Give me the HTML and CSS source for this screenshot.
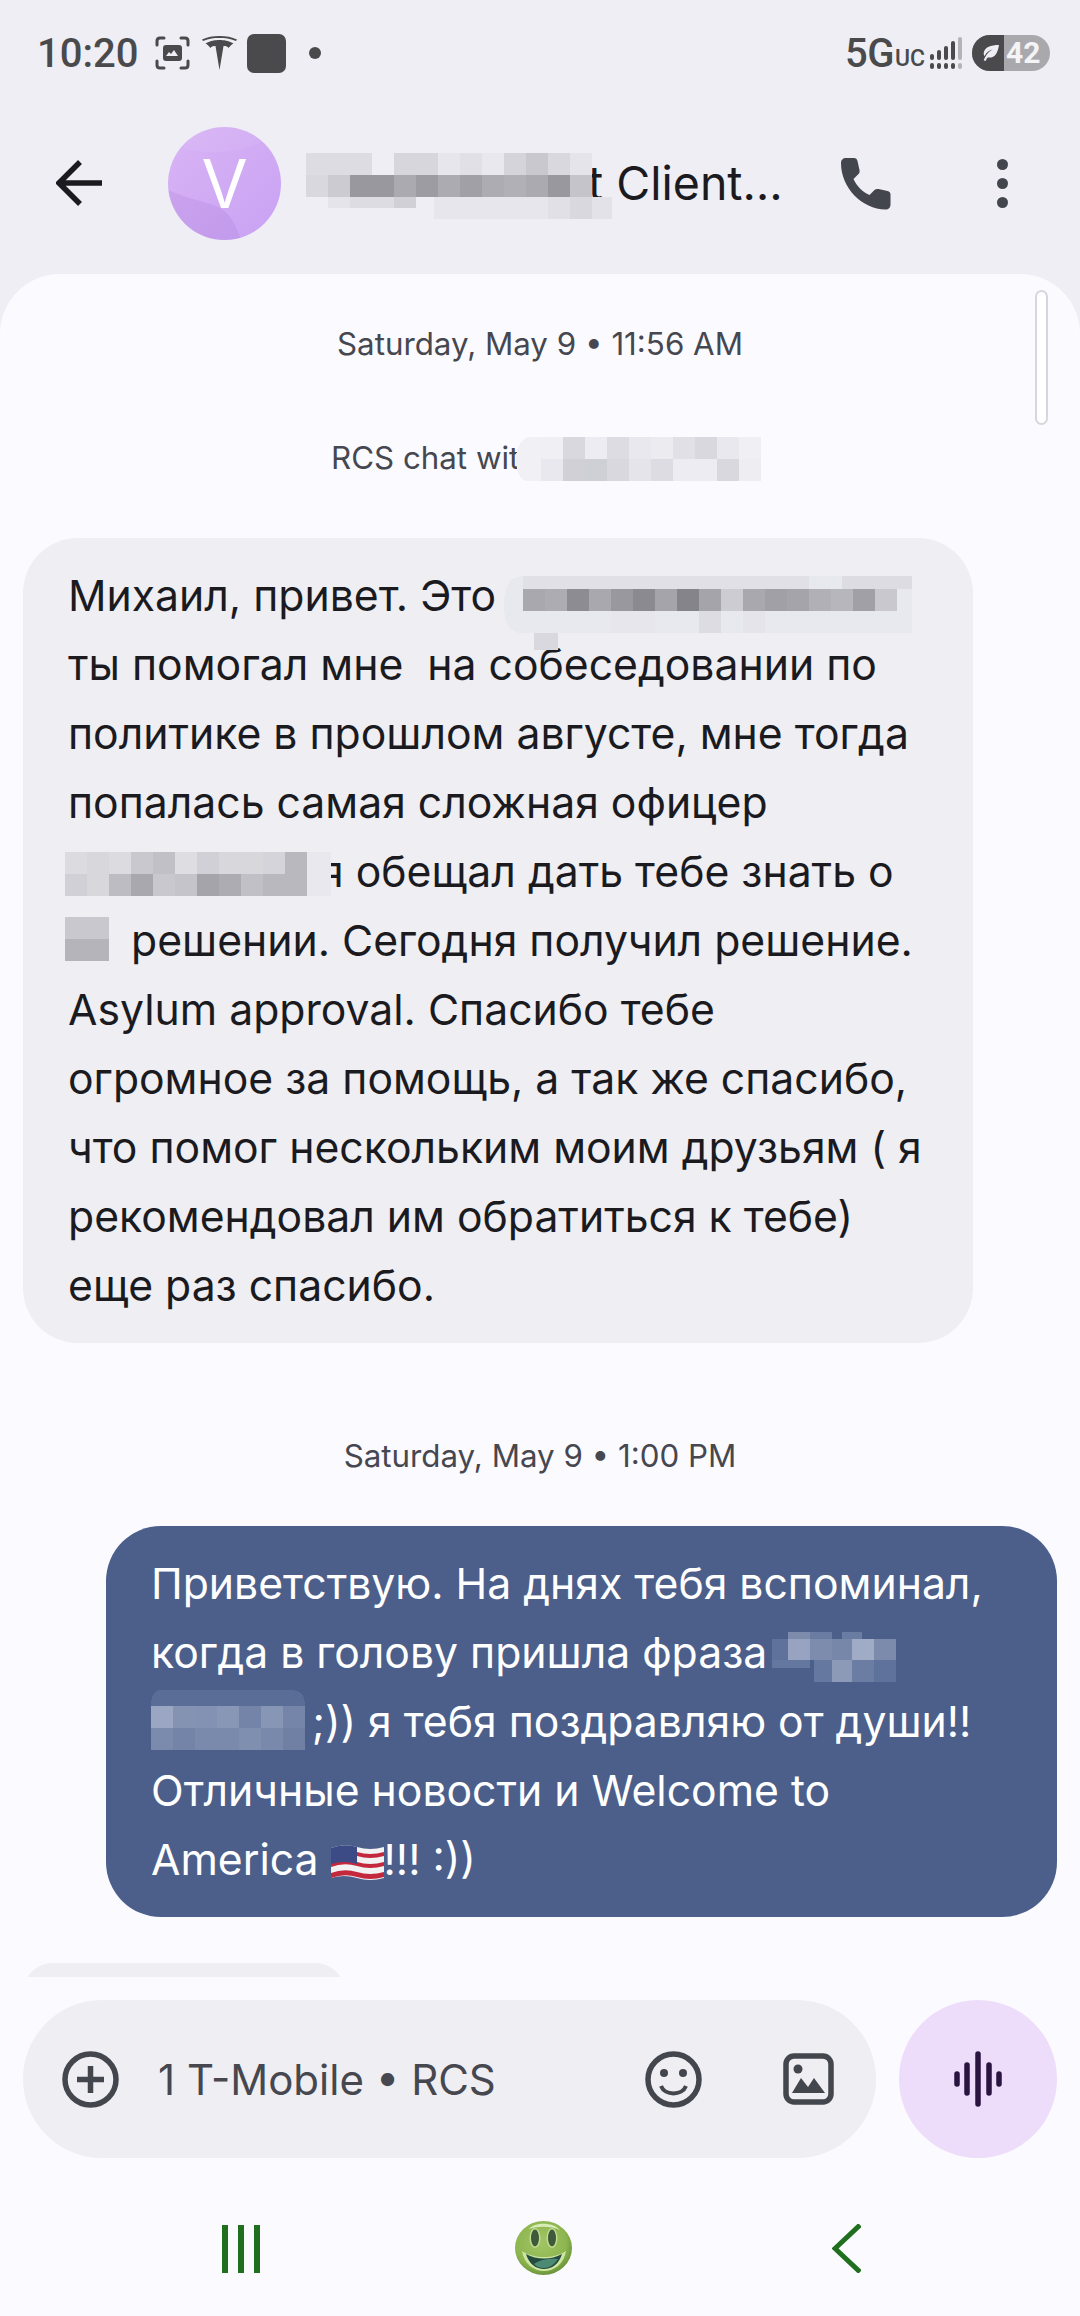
FILE: index.html
```html
<!DOCTYPE html>
<html lang="ru">
<head>
    <meta charset="UTF-8">
    <title>Messages</title>
    <link rel="stylesheet" href="styles.css">
</head>
<body>
<div id="app">
    <div class="status">
        <span class="time">10:20</span>
        <svg class="st-scan" viewBox="0 0 35 34" fill="none" stroke="#4a4a4c" stroke-width="3" stroke-linecap="round">
            <path d="M2 9V5q0-3 3-3h4M26 2h4q3 0 3 3v4M2 25v4q0 3 3 3h4M33 25v4q0 3-3 3h-4"/>
            <rect x="8" y="9" width="19" height="16" rx="3" fill="#4a4a4c" stroke="none"/>
            <path d="M11 20l3-4 2 2 3-4 4 6z" fill="#eeeef4" stroke="none"/>
        </svg>
        <svg class="st-tesla" viewBox="0 0 35 34" fill="#4a4a4c">
            <path d="M17.5 34l4-24c3 0 4 .5 5 2 2-2.500 3-3.500 5-4.500C26 4.500 22 4 17.500 4S9 4.500 3.500 7.500c2 1 3 2 5 4.500 1-1.500 2-2 5-2z"/>
            <path d="M0 3.500C5 1 11 0 17.500 0S30 1 35 3.500l-1 1.500C28 2.500 23 2 17.500 2S7 2.500 1 5z"/>
        </svg>
        <span class="st-square"></span>
        <span class="st-dot"></span>
        <span class="st-right">
            <span class="net">5G</span><span class="uc">UC</span>
            <svg class="st-signal" viewBox="0 0 32 32" fill="#4a4a4c">
                <rect x="0" y="17" width="4" height="6" rx="2"/>
                <rect x="7" y="13" width="4" height="10" rx="2"/>
                <rect x="14" y="9" width="4" height="14" rx="2"/>
                <rect x="21" y="4" width="4" height="19" rx="2"/>
                <rect x="28" y="0" width="4" height="23" rx="2" fill="#b4b4b8"/>
                <rect x="0" y="26" width="4" height="6" rx="2"/>
                <rect x="7" y="26" width="4" height="6" rx="2"/>
                <rect x="14" y="26" width="4" height="6" rx="2"/>
                <rect x="21" y="26" width="4" height="6" rx="2"/>
                <rect x="28" y="26" width="4" height="6" rx="2" fill="#b4b4b8"/>
            </svg>
            <span class="battery">
                <span class="bat-leaf">
                    <svg viewBox="0 0 22 20" fill="#eeeef4">
                        <path d="M21 1C12 1 5 3 4 10c0 1.500.3 2.500 1 3.500C7 9 10 7 14 6c-4 2-7 5-10 12l2 1c1-2 1.500-3 2.500-4 8 1 11-5 12.500-14z"/>
                    </svg>
                </span>
                <span class="bat-num">42</span>
            </span>
        </span>
    </div>

    <div class="header">
        <svg class="back" viewBox="0 0 46 46" fill="none" stroke="#1b1b1f" stroke-width="5.500">
            <path d="M46 23H4M24 2L3 23l21 21"/>
        </svg>
        <div class="avatar">
            <svg class="avatar-bg" viewBox="0 0 113 113">
                <path d="M15 21c25 7 55 6 85-9L80 0H30z" fill="#fff" opacity=".06"/>
                <path d="M0 63c20 9 35 11 48 16 13 5 20 18 25 34H40C15 105 2 85 0 63z" fill="#7a3fb0" opacity=".1"/>
            </svg>
            <span>V</span>
        </div>
        <div class="title">t Client…</div>
        <svg class="mosaic m-title" viewBox="0 0 307 66" shape-rendering="crispEdges">
            <g transform="scale(22)">
                <rect x="0" y="0" width="3" height="1" fill="#dcdce2"/>
                <rect x="4" y="0" width="2" height="1" fill="#d6d6dc"/>
                <rect x="6" y="0" width="1" height="1" fill="#e6e6ec"/>
                <rect x="7" y="0" width="1" height="1" fill="#e0e0e6"/>
                <rect x="8" y="0" width="1" height="1" fill="#e8e8ee"/>
                <rect x="9" y="0" width="1" height="1" fill="#d4d4da"/>
                <rect x="10" y="0" width="1" height="1" fill="#c8c8ce"/>
                <rect x="11" y="0" width="1" height="1" fill="#d8d8de"/>
                <rect x="12" y="0" width="1" height="1" fill="#e4e4ea"/>
                <rect x="0" y="1" width="1" height="1" fill="#d8d8de"/>
                <rect x="1" y="1" width="1" height="1" fill="#cbcbd1"/>
                <rect x="2" y="1" width="2" height="1" fill="#98989e"/>
                <rect x="4" y="1" width="1" height="1" fill="#aaaab0"/>
                <rect x="5" y="1" width="1" height="1" fill="#9c9ca2"/>
                <rect x="6" y="1" width="1" height="1" fill="#ababb1"/>
                <rect x="7" y="1" width="1" height="1" fill="#a0a0a6"/>
                <rect x="8" y="1" width="1" height="1" fill="#acacb2"/>
                <rect x="9" y="1" width="1" height="1" fill="#b0b0b6"/>
                <rect x="10" y="1" width="1" height="1" fill="#aaaab0"/>
                <rect x="11" y="1" width="1" height="1" fill="#98989e"/>
                <rect x="12" y="1" width="1" height="1" fill="#c4c4ca"/>
                <rect x="1" y="2" width="1" height=".5" fill="#e4e4ea"/>
                <rect x="2" y="2" width="2" height=".5" fill="#dcdce2"/>
                <rect x="4" y="2" width="1" height=".5" fill="#d0d0d6"/>
                <rect x="5.800" y="2" width="7.200" height="1" fill="#e6e6ec"/>
                <rect x="11" y="2" width="1" height="1" fill="#e0e0e6"/>
                <rect x="12" y="2" width="1" height="1" fill="#d8d8de"/>
                <rect x="13" y="2" width=".9" height="1" fill="#e2e2e8"/>
            </g>
        </svg>
        <svg class="phone" viewBox="0 0 53 53" fill="#44464e">
            <path d="M1 6C1 3 3 1 6 1h8c2 0 3 1 3.500 3l2 9c.3 1.500 0 3-1 4l-5 5c3 7 9 13 16 16l5-5c1-1 2.500-1.300 4-1l9 2c2 .5 3 1.500 3 3.500v10c0 3-2 5-5 5C22 52 1 31 1 6z"/>
        </svg>
        <span class="dots"><i></i><i></i><i></i></span>
    </div>

    <div class="panel">
        <div class="chat">
            <div class="scrollbar"></div>
            <p class="stamp first">Saturday, May 9 • 11:56 AM</p>
            <p class="stamp rcs">RCS chat with</p>
            <svg class="mosaic m-rcs" viewBox="0 0 248 44" shape-rendering="crispEdges">
                <path d="M0 22Q0 6 12 0h14v44H10Q0 40 0 22z" fill="#f1f1f5"/>
                <g transform="translate(3 0) scale(22)">
                    <rect x="1" y="0" width="1" height="1" fill="#f0f0f4"/>
                    <rect x="2" y="0" width="1" height="1" fill="#d8d8de"/>
                    <rect x="3" y="0" width="1" height="1" fill="#ececf2"/>
                    <rect x="4" y="0" width="1" height="1" fill="#dcdce2"/>
                    <rect x="5" y="0" width="1" height="1" fill="#e8e8ee"/>
                    <rect x="6" y="0" width="1" height="1" fill="#ebebf0"/>
                    <rect x="7" y="0" width="1" height="1" fill="#e0e0e6"/>
                    <rect x="8" y="0" width="1" height="1" fill="#d8d8de"/>
                    <rect x="9" y="0" width="1" height="1" fill="#e8e8ee"/>
                    <rect x="10" y="0" width="1" height="1" fill="#f0f0f4"/>
                    <rect x="1" y="1" width="1" height="1" fill="#e8e8ee"/>
                    <rect x="2" y="1" width="1" height="1" fill="#d0d0d6"/>
                    <rect x="3" y="1" width="1" height="1" fill="#cfcfd6"/>
                    <rect x="4" y="1" width="1" height="1" fill="#d8d8de"/>
                    <rect x="5" y="1" width="1" height="1" fill="#e4e4ea"/>
                    <rect x="6" y="1" width="1" height="1" fill="#dcdce2"/>
                    <rect x="7" y="1" width="1" height="1" fill="#ececf2"/>
                    <rect x="8" y="1" width="1" height="1" fill="#ececf2"/>
                    <rect x="9" y="1" width="1" height="1" fill="#d8d8de"/>
                    <rect x="10" y="1" width="1" height="1" fill="#eeeef2"/>
                </g>
            </svg>

            <div class="bubble incoming">
                <span class="line">Михаил, привет. Это</span>
                <span class="line">ты помогал мне  на собеседовании по</span>
                <span class="line">политике в прошлом августе, мне тогда</span>
                <span class="line">попалась самая сложная офицер</span>
                <span class="line skip-a">я обещал дать тебе знать о</span>
                <span class="line skip-b">решении. Сегодня получил решение.</span>
                <span class="line">Asylum approval. Спасибо тебе</span>
                <span class="line">огромное за помощь, а так же спасибо,</span>
                <span class="line">что помог нескольким моим друзьям ( я</span>
                <span class="line">рекомендовал им обратиться к тебе)</span>
                <span class="line">еще раз спасибо.</span>

                <svg class="mosaic m-name" viewBox="0 0 408 74" shape-rendering="crispEdges">
                    <path d="M19 0h389v57H19Q0 57 0 30 0 0 19 0z" fill="#e6e6ec" opacity=".7"/>
                    <g transform="translate(19 13) scale(22)">
                        <rect x="0" y="-.6" width="13" height=".6" fill="#e0e0e6"/>
                        <rect x="14.500" y="-.6" width="7.500" height=".6" fill="#dcdce2"/>
                        <rect x="0" y="0" width="1" height="1" fill="#a8a8ae"/>
                        <rect x="1" y="0" width="1" height="1" fill="#acacb2"/>
                        <rect x="2" y="0" width="1" height="1" fill="#8c8c92"/>
                        <rect x="3" y="0" width="1" height="1" fill="#a8a8ae"/>
                        <rect x="4" y="0" width="1" height="1" fill="#98989e"/>
                        <rect x="5" y="0" width="1" height="1" fill="#8a8a90"/>
                        <rect x="6" y="0" width="1" height="1" fill="#a4a4aa"/>
                        <rect x="7" y="0" width="1" height="1" fill="#84848a"/>
                        <rect x="8" y="0" width="1" height="1" fill="#a4a4aa"/>
                        <rect x="9" y="0" width="1" height="1" fill="#ccccd2"/>
                        <rect x="10" y="0" width="1" height="1" fill="#a8a8ae"/>
                        <rect x="11" y="0" width="1" height="1" fill="#a0a0a6"/>
                        <rect x="12" y="0" width="1" height="1" fill="#a4a4aa"/>
                        <rect x="13" y="0" width="1" height="1" fill="#b0b0b6"/>
                        <rect x="14" y="0" width="1" height="1" fill="#b6b6bc"/>
                        <rect x="15" y="0" width="1" height="1" fill="#a0a0a6"/>
                        <rect x="16" y="0" width="1" height="1" fill="#c8c8ce"/>
                        <rect x="4" y="1" width="2" height="1" fill="#e6e6ec"/>
                        <rect x="8" y="1" width="1" height="1" fill="#dcdce2"/>
                        <rect x="10" y="1" width="1" height="1" fill="#e4e4ea"/>
                    </g>
                    <rect x="30" y="57" width="24" height="17" fill="#d8d8de"/>
                </svg>
                <svg class="mosaic m-surname" viewBox="0 0 266 44" shape-rendering="crispEdges">
                    <rect x="240" y="0" width="26" height="44" fill="#e8e8ee"/>
                    <g transform="scale(22)">
                        <rect x="0" y="0" width="1" height="1" fill="#dcdce0"/>
                        <rect x="1" y="0" width="1" height="1" fill="#d8d8dc"/>
                        <rect x="2" y="0" width="1" height="1" fill="#dcdce0"/>
                        <rect x="3" y="0" width="1" height="1" fill="#c8c8ce"/>
                        <rect x="4" y="0" width="1" height="1" fill="#c0c0c6"/>
                        <rect x="5" y="0" width="1" height="1" fill="#dedee2"/>
                        <rect x="6" y="0" width="1" height="1" fill="#d0d0d6"/>
                        <rect x="7" y="0" width="1" height="1" fill="#d8d8dc"/>
                        <rect x="8" y="0" width="1" height="1" fill="#d8d8dc"/>
                        <rect x="9" y="0" width="1" height="1" fill="#d4d4da"/>
                        <rect x="10" y="0" width="1" height="1" fill="#b8b8be"/>
                        <rect x="0" y="1" width="1" height="1" fill="#d0d0d6"/>
                        <rect x="1" y="1" width="1" height="1" fill="#d8d8dc"/>
                        <rect x="2" y="1" width="1" height="1" fill="#bcbcc2"/>
                        <rect x="3" y="1" width="1" height="1" fill="#a8a8ae"/>
                        <rect x="4" y="1" width="1" height="1" fill="#c8c8ce"/>
                        <rect x="5" y="1" width="1" height="1" fill="#c4c4ca"/>
                        <rect x="6" y="1" width="1" height="1" fill="#a4a4aa"/>
                        <rect x="7" y="1" width="1" height="1" fill="#acacb2"/>
                        <rect x="8" y="1" width="1" height="1" fill="#c0c0c6"/>
                        <rect x="9" y="1" width="1" height="1" fill="#b8b8be"/>
                        <rect x="10" y="1" width="1" height="1" fill="#b8b8be"/>
                    </g>
                </svg>
                <svg class="mosaic m-word" viewBox="0 0 44 44" shape-rendering="crispEdges">
                    <rect width="44" height="22" fill="#c8c8ce"/>
                    <rect y="22" width="44" height="22" fill="#b4b4ba"/>
                </svg>
            </div>

            <p class="stamp second">Saturday, May 9 • 1:00 PM</p>

            <div class="bubble outgoing">
                <span class="line">Приветствую. На днях тебя вспоминал,</span>
                <span class="line">когда в голову пришла фраза</span>
                <span class="line skip-c">;)) я тебя поздравляю от души!!</span>
                <span class="line">Отличные новости и Welcome to</span>
                <span class="line">America <svg class="flag" viewBox="0 0 53 36">
                    <path d="M0 3Q13-2 26 2t27 0v31q-14 4-27 0T0 33z" fill="#f2f2f2"/>
                    <path d="M0 8Q13 3 26 7t27 0v4q-14 4-27 0T0 12zM0 18q13-5 26-1t27 0v4q-14 4-27 0T0 22zM0 28q13-5 26-1t27 0v5q-14 4-27 0T0 33z" fill="#c4283d"/>
                    <path d="M0 3Q13-2 26 2v17Q13 15 0 19z" fill="#3c4a86"/>
                </svg>!!! :))</span>

                <svg class="mosaic m-phrase" viewBox="0 0 124 50" shape-rendering="crispEdges">
                    <rect x="16" y="0" width="22" height="7" fill="#7d8bac"/>
                    <rect x="38" y="0" width="22" height="7" fill="#6a7ca2"/>
                    <rect x="70" y="0" width="20" height="7" fill="#6a7ca2"/>
                    <rect x="0" y="7" width="16" height="21" fill="#5f729b"/>
                    <rect x="16" y="7" width="22" height="21" fill="#97a3c0"/>
                    <rect x="38" y="7" width="22" height="21" fill="#7d8bac"/>
                    <rect x="60" y="7" width="20" height="21" fill="#7687aa"/>
                    <rect x="80" y="7" width="22" height="21" fill="#a0abc5"/>
                    <rect x="102" y="7" width="22" height="21" fill="#7c8aab"/>
                    <rect x="0" y="28" width="38" height="8" fill="#64779e"/>
                    <rect x="42" y="28" width="18" height="22" fill="#6478a0"/>
                    <rect x="60" y="28" width="20" height="22" fill="#8c9ab8"/>
                    <rect x="80" y="28" width="22" height="22" fill="#6c7da3"/>
                    <rect x="102" y="28" width="22" height="22" fill="#5f729b"/>
                </svg>
                <svg class="mosaic m-phrase2" viewBox="0 0 165 60" shape-rendering="crispEdges">
                    <path d="M10 0h130q14 0 14 16H0Q0 0 10 0z" fill="#5a6d97"/>
                    <g transform="translate(0 16) scale(22)">
                        <rect x="0" y="0" width="1" height="1" fill="#9aa6c2"/>
                        <rect x="1" y="0" width="1" height="1" fill="#8593b3"/>
                        <rect x="2" y="0" width="1" height="1" fill="#8391b2"/>
                        <rect x="3" y="0" width="1" height="1" fill="#8997b6"/>
                        <rect x="4" y="0" width="1" height="1" fill="#7484a8"/>
                        <rect x="5" y="0" width="1" height="1" fill="#8896b5"/>
                        <rect x="6" y="0" width="1" height="1" fill="#7585a9"/>
                        <rect x="0" y="1" width="1" height="1" fill="#7b8bad"/>
                        <rect x="1" y="1" width="1" height="1" fill="#7484a8"/>
                        <rect x="2" y="1" width="1" height="1" fill="#7a8aac"/>
                        <rect x="3" y="1" width="1" height="1" fill="#7a8aac"/>
                        <rect x="4" y="1" width="1" height="1" fill="#7f8fb0"/>
                        <rect x="5" y="1" width="1" height="1" fill="#7989ab"/>
                        <rect x="6" y="1" width="1" height="1" fill="#7080a5"/>
                    </g>
                </svg>
            </div>

            <div class="bubble peek"></div>
        </div>

        <div class="footer">
            <div class="compose">
                <div class="pill">
                    <svg class="ic-plus" viewBox="0 0 57 57" fill="none" stroke="#44464e" stroke-width="5.500">
                        <circle cx="28.500" cy="28.500" r="25.500"/>
                        <path d="M28.500 15v27M15 28.500h27"/>
                    </svg>
                    <span class="hint">1 T-Mobile • RCS</span>
                    <svg class="ic-smile" viewBox="0 0 57 57" fill="none" stroke="#44464e" stroke-width="5.500">
                        <circle cx="28.500" cy="28.500" r="25.500"/>
                        <path d="M16 35c4 10 21 10 25 0" stroke-width="4"/>
                        <circle cx="19" cy="22" r="4" fill="#44464e" stroke="none"/>
                        <circle cx="38" cy="22" r="4" fill="#44464e" stroke="none"/>
                    </svg>
                    <svg class="ic-image" viewBox="0 0 51 52">
                        <rect x="3" y="3" width="45" height="46" rx="8" fill="none" stroke="#44464e" stroke-width="5.500"/>
                        <circle cx="15" cy="16" r="4.500" fill="#44464e"/>
                        <path d="M9 40l9-15 7 9 6-9 11 15z" fill="#44464e"/>
                    </svg>
                </div>
                <div class="mic">
                    <svg viewBox="0 0 48 56" fill="none" stroke="#2a1540" stroke-width="5.500" stroke-linecap="round">
                        <path d="M3 23v10M13 14v28M24 3v50M35 14v28M45 23v10"/>
                    </svg>
                </div>
            </div>
            <div class="nav">
                <span class="nav-bars"><i></i><i></i><i></i></span>
                <svg class="nav-face" viewBox="0 0 57 54">
                    <defs>
                        <radialGradient id="faceFill" cx=".45" cy=".4" r=".65">
                            <stop offset="0" stop-color="#a2c565"/>
                            <stop offset=".7" stop-color="#8cb54f"/>
                            <stop offset="1" stop-color="#5f8a34"/>
                        </radialGradient>
                    </defs>
                    <ellipse cx="28.500" cy="27" rx="28.500" ry="27" fill="url(#faceFill)"/>
                    <path d="M14 8C20 1 38 1 45 9 36 5 23 5 14 8z" fill="#d8ecb8"/>
                    <ellipse cx="20" cy="17" rx="5.500" ry="10" fill="#c4dd92"/>
                    <ellipse cx="37" cy="17" rx="5.500" ry="10" fill="#c4dd92"/>
                    <ellipse cx="20" cy="17" rx="4" ry="8.500" fill="#3f5a3a"/>
                    <ellipse cx="37" cy="17" rx="4" ry="8.500" fill="#3f5a3a"/>
                    <path d="M7 30c12 8 32 8 44 0-2 13-12 20-22 20S9 43 7 30z" fill="#cfe5a2"/>
                    <path d="M11 33c11 6 25 6 36 0-3 10-10 15-18 15S14 43 11 33z" fill="#234c3e"/>
                    <path d="M19 43c6-5 17-6 24-5-4 6-9 9-14 9-4 0-7-1-10-4z" fill="#4d8a74"/>
                </svg>
                <svg class="nav-back" viewBox="0 0 29 49" fill="none" stroke="#1f6f1f" stroke-width="5">
                    <path d="M28 1L3 24.500 28 48"/>
                </svg>
            </div>
        </div>
    </div>
</div>
</body>
</html>
```

FILE: styles.css
```css
body,p{ margin: 0;}
body{
    background-color: #eeeef4;
    font-family: Inter, "Noto Sans", sans-serif;
    color: #1b1b1f;
}
#app{
    display: flex;
    flex-direction: column;
    width: 1080px;
    height: 2316px;
    overflow: hidden;
}
svg{
    display: block;
    flex: none;
}
.mosaic{
    position: absolute;
}

/* status bar */
.status{
    display: flex;
    align-items: center;
    height: 106px;
    padding: 0 30px 0 37px;
    font-family: Roboto, sans-serif;
    color: #4a4a4c;
    box-sizing: border-box;
}
.time{
    font-size: 40px;
    font-weight: 500;
    width: 100px;
}
.st-scan{
    width: 35px;
    height: 34px;
    margin-left: 18px;
}
.st-tesla{
    width: 35px;
    height: 34px;
    margin-left: 12px;
}
.st-square{
    width: 39px;
    height: 39px;
    margin-left: 10px;
    border-radius: 7px;
    background-color: #4a4a4c;
}
.st-dot{
    width: 12px;
    height: 12px;
    margin-left: 23px;
    border-radius: 50%;
    background-color: #4a4a4c;
}
.st-right{
    display: flex;
    align-items: center;
    margin-left: auto;
}
.net{
    font-size: 40px;
    font-weight: 500;
    letter-spacing: -.5px;
}
.uc{
    font-size: 23px;
    font-weight: 500;
    margin: 10px 0 0 1px;
}
.st-signal{
    width: 32px;
    height: 32px;
    margin-left: 5px;
}
.battery{
    display: flex;
    width: 78px;
    height: 36px;
    margin-left: 10px;
    border-radius: 18px;
    overflow: hidden;
    background-color: #a9a9ad;
}
.bat-leaf{
    display: flex;
    align-items: center;
    justify-content: flex-end;
    width: 32px;
    padding-right: 4px;
    box-sizing: border-box;
    background-color: #4a4a4c;
}
.bat-leaf svg{
    width: 20px;
    height: 18px;
}
.bat-num{
    margin-left: 2px;
    font-size: 30px;
    font-weight: 700;
    line-height: 36px;
    color: #f4f4f6;
}

/* header */
.header{
    position: relative;
    display: flex;
    align-items: center;
    height: 168px;
    padding-bottom: 14px;
    box-sizing: border-box;
}
.back{
    width: 46px;
    height: 46px;
    margin-left: 56px;
}
.avatar{
    position: relative;
    width: 113px;
    height: 113px;
    margin-left: 66px;
    border-radius: 50%;
    overflow: hidden;
    background: linear-gradient(135deg, #d9b4f5, #c8a2f3);
    text-align: center;
    font-size: 67px;
    line-height: 113px;
    color: #fff;
}
.avatar-bg{
    position: absolute;
    top: 0;
    left: 0;
    width: 113px;
    height: 113px;
}
.avatar span{
    position: relative;
}
.title{
    width: 250px;
    margin-left: 307px;
    font-size: 46.500px;
    white-space: nowrap;
}
.m-title{
    top: 47px;
    left: 306px;
    width: 307px;
    height: 66px;
}
.phone{
    width: 53px;
    height: 53px;
    margin-left: 2px;
}
.dots{
    display: flex;
    flex-direction: column;
    gap: 8px;
    margin-left: 104px;
}
.dots i{
    display: block;
    width: 11px;
    height: 11px;
    border-radius: 50%;
    background-color: #44464e;
}

/* chat */
.panel{
    flex: 1;
    display: flex;
    flex-direction: column;
    border-radius: 60px 60px 0 0;
    background-color: #fafaff;
}
.chat{
    position: relative;
    height: 1703px;
    padding: 50px 23px 0;
    box-sizing: border-box;
    overflow: hidden;
}
.scrollbar{
    position: absolute;
    top: 16px;
    right: 32px;
    width: 9px;
    height: 131px;
    border: 2px solid #d6d6dc;
    border-radius: 7px;
    background-color: #fff;
}
.stamp{
    height: 40px;
    text-align: center;
    font-size: 31.300px;
    line-height: 40px;
    color: #46474f;
}
.rcs{
    margin-top: 74px;
    text-align: left;
    padding-left: 308px;
}
.m-rcs{
    top: 163px;
    left: 516px;
    width: 248px;
    height: 44px;
}
.second{
    margin-top: 93px;
}
.bubble{
    position: relative;
    padding: 23px 45px;
    box-sizing: border-box;
    border-radius: 55px;
    font-size: 42.700px;
    line-height: 69px;
}
.line{
    display: block;
    white-space: pre;
}
.incoming{
    width: 950px;
    margin-top: 60px;
    background-color: #eeeef3;
}
.outgoing{
    width: 951px;
    margin: 50px 0 0 83px;
    background-color: #4c5f8b;
    color: #fff;
}
.peek{
    width: 322px;
    height: 60px;
    margin-top: 46px;
    background-color: #eeeef3;
}
.skip-a{
    padding-left: 252px;
}
.skip-b{
    padding-left: 63px;
}
.skip-c{
    padding-left: 161px;
}
.flag{
    display: inline-block;
    width: 53px;
    height: 36px;
    vertical-align: -6px;
}
.m-name{
    top: 38px;
    left: 481px;
    width: 408px;
    height: 74px;
}
.m-surname{
    top: 314px;
    left: 42px;
    width: 266px;
    height: 44px;
}
.m-word{
    top: 379px;
    left: 42px;
    width: 44px;
    height: 44px;
}
.m-phrase{
    top: 106px;
    left: 666px;
    width: 124px;
    height: 50px;
}
.m-phrase2{
    top: 164px;
    left: 45px;
    width: 165px;
    height: 60px;
}

/* compose + nav */
.footer{
    flex: 1;
    padding-top: 23px;
}
.compose{
    display: flex;
    gap: 23px;
    padding: 0 23px;
}
.pill{
    flex: 1;
    display: flex;
    align-items: center;
    height: 158px;
    padding: 0 42px 0 39px;
    box-sizing: border-box;
    border-radius: 79px;
    background-color: #eeeef3;
}
.ic-plus{
    width: 57px;
    height: 57px;
}
.hint{
    flex: 1;
    margin-left: 39px;
    font-size: 42px;
    color: #46474f;
}
.ic-smile{
    width: 57px;
    height: 57px;
}
.ic-image{
    width: 51px;
    height: 52px;
    margin-left: 81px;
}
.mic{
    display: flex;
    align-items: center;
    justify-content: center;
    width: 158px;
    height: 158px;
    border-radius: 50%;
    background-color: #eedcfb;
}
.mic svg{
    width: 48px;
    height: 56px;
}
.nav{
    display: flex;
    align-items: flex-start;
    justify-content: space-between;
    padding: 62px 219px 0 222px;
}
.nav-bars{
    display: flex;
    justify-content: space-between;
    width: 38px;
    height: 48px;
    margin-top: 5px;
}
.nav-bars i{
    width: 6px;
    background-color: #1f6f1f;
}
.nav-face{
    width: 57px;
    height: 54px;
    margin: 1px 6px 0 0;
}
.nav-back{
    width: 29px;
    height: 49px;
    margin-top: 4px;
}
```
